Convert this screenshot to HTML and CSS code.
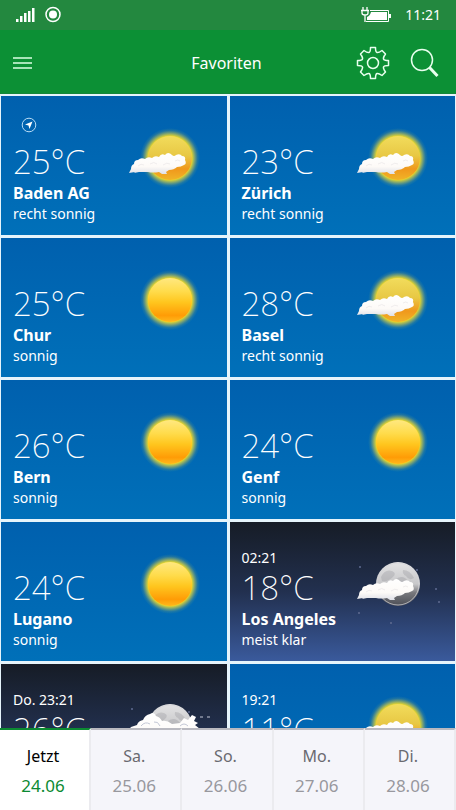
FILE: index.html
```
<!DOCTYPE html>
<html lang="de">
<head>
  <meta charset="UTF-8">
  <meta name="viewport" content="width=device-width, initial-scale=1.0">
  <title>Favoriten</title>
  <link rel="stylesheet" href="styles.css">
</head>
<body>
  <!-- shared weather icons -->
  <svg class="defs" width="0" height="0" aria-hidden="true">
    <defs>
      <radialGradient id="glow">
        <stop offset="0.72" stop-color="#ffe21c" stop-opacity="0.95"/>
        <stop offset="0.82" stop-color="#e8d838" stop-opacity="0.55"/>
        <stop offset="0.92" stop-color="#c8c850" stop-opacity="0.15"/>
        <stop offset="1" stop-color="#a0c850" stop-opacity="0"/>
      </radialGradient>
      <linearGradient id="sun-fill" x1="0" y1="0" x2="0" y2="1">
        <stop offset="0" stop-color="#ffe880"/>
        <stop offset="0.3" stop-color="#ffdc4c"/>
        <stop offset="0.55" stop-color="#ffc61e"/>
        <stop offset="0.85" stop-color="#ff9c06"/>
        <stop offset="1" stop-color="#ffb81c"/>
      </linearGradient>
      <linearGradient id="hazy-fill" x1="0" y1="0" x2="0" y2="1">
        <stop offset="0" stop-color="#f2dc5c"/>
        <stop offset="0.45" stop-color="#e8c844"/>
        <stop offset="0.75" stop-color="#f0981c"/>
        <stop offset="1" stop-color="#f0b428"/>
      </linearGradient>
      <linearGradient id="moon-fill" x1="0" y1="0" x2="0" y2="1">
        <stop offset="0" stop-color="#e4e4e5"/>
        <stop offset="0.5" stop-color="#c8c8ca"/>
        <stop offset="0.7" stop-color="#77777b"/>
        <stop offset="1" stop-color="#4c4e56"/>
      </linearGradient>
      <linearGradient id="cloud-fill" x1="0" y1="0" x2="0" y2="1">
        <stop offset="0" stop-color="#ffffff"/>
        <stop offset="0.65" stop-color="#fdfaf7"/>
        <stop offset="1" stop-color="#dfe0e8"/>
      </linearGradient>
      <symbol id="cloud" viewBox="0 0 112 112">
        <path d="M15 70 L17 66 Q17 62 20 61 Q20 57 24 57 Q27 54 31 56 Q34 53 38 55 Q41 52 45 54 Q47 50 51 52 Q54 48 58 52 Q60 54 62 52 Q66 50 68 53 Q72 53 71 57 Q73 61 70 62 Q67 64 63 64 Q60 67 55 67 L52 69 L53 71 L48 71 L45 69 Q39 70 34 69 L25 69 L20 70 L21 69 Z" fill="url(#cloud-fill)"/>
        <path d="M24 63 Q27 60 30 62 M36 61 Q40 58 43 61 M49 62 Q53 59 56 61 M61 58 Q64 56 66 58" fill="none" stroke="#f0eded" stroke-width="1"/>
      </symbol>
      <symbol id="stars" viewBox="0 0 112 112">
        <g fill="#5f6b90">
          <circle cx="18" cy="38" r="1"/><circle cx="75" cy="41" r="1"/>
          <circle cx="28" cy="57" r="1"/><circle cx="94" cy="60" r="1"/>
          <circle cx="97" cy="73" r="1"/><circle cx="17" cy="84" r="1"/>
          <circle cx="49" cy="94" r="1"/>
        </g>
      </symbol>
      <symbol id="moon" viewBox="0 0 112 112">
        <circle cx="56" cy="55" r="22" fill="url(#moon-fill)"/>
        <circle cx="56" cy="55" r="21" fill="none" stroke="#d4d4d8" stroke-width="1" opacity="0.7"/>
        <path d="M39 48 Q43 40 50 42 Q55 44 51 48 Q46 53 40 52 Z M61 41 Q68 41 72 49 Q67 52 64 47 Q60 45 61 41 Z M54 50 Q61 45 66 52 Q63 57 56 54 Z" fill="#8e9095" opacity="0.3"/>
      </symbol>
      <symbol id="sunny" viewBox="0 0 112 112">
        <circle cx="56" cy="55" r="30" fill="url(#glow)"/>
        <circle cx="56" cy="55" r="22" fill="url(#sun-fill)"/>
      </symbol>
      <symbol id="partly" viewBox="0 0 112 112">
        <circle cx="56" cy="55" r="30" fill="url(#glow)"/>
        <circle cx="56" cy="55" r="22" fill="url(#hazy-fill)"/>
        <use href="#cloud"/>
      </symbol>
      <symbol id="clear-night" viewBox="0 0 112 112">
        <use href="#stars"/>
        <use href="#moon"/>
        <use href="#cloud"/>
      </symbol>
      <symbol id="cloudy-night" viewBox="0 0 112 112">
        <use href="#stars"/>
        <use href="#moon"/>
        <path d="M14 60 L17 56 L23 54 Q24 50 29 49 Q31 44 36 43 Q40 40 42 45 Q46 46 48 50 Q53 49 58 53 L66 52 L70 47 L74 49 L78 44 L82 46 L80 50 L84 52 L81 54 L86 58 L88 64 Q88 76 76 76 L30 76 Q14 76 14 60 Z" fill="url(#cloud-fill)"/>
        <path d="M27 55 Q31 50 36 53 M40 51 Q44 50 46 55 M66 55 Q70 51 74 55 M86 46 H89 M93 46 H96" fill="none" stroke="#c4c8d6" stroke-width="1"/>
      </symbol>
    </defs>
  </svg>

  <div class="statusbar">
    <svg class="signal" width="48" height="18" viewBox="0 0 48 18" aria-label="Signal">
      <g fill="#fff">
        <rect x="0" y="13" width="2.500" height="3"/>
        <rect x="4" y="10" width="2.500" height="6"/>
        <rect x="8" y="7" width="2.500" height="9"/>
        <rect x="12" y="5" width="2.500" height="11"/>
        <rect x="16" y="2" width="2.500" height="14"/>
      </g>
      <circle cx="37" cy="8.500" r="7" fill="none" stroke="#fff" stroke-width="1.500"/>
      <circle cx="37" cy="8.500" r="4" fill="#fff"/>
    </svg>
    <svg class="battery" width="30" height="18" viewBox="0 0 30 18" aria-label="Akku">
      <path d="M2 1 V4 M6 1 V4 M0 4.500 H8 M1 5 V7 Q1 9 4 9 Q7 9 7 7 V5 M4 9 V16" fill="none" stroke="#fff" stroke-width="1.300"/>
      <path d="M9 4.500 H27.500 V15.500 H5" fill="none" stroke="#fff"/>
      <path d="M10 6 H26 V14 H6 V11 Q9 10 10 6 Z M28 8 H30 V12 H28 Z" fill="#fff"/>
    </svg>
    <span class="clock">11:21</span>
  </div>

  <header class="appbar">
    <button class="icon-btn menu" aria-label="Menü">
      <svg width="20" height="14" viewBox="0 0 20 14">
        <path d="M0 2 H19 M0 7 H19 M0 12 H19" stroke="#dcffe4" stroke-width="1.500"/>
      </svg>
    </button>
    <h1>Favoriten</h1>
    <div class="actions">
      <button class="icon-btn" aria-label="Einstellungen">
        <svg width="34" height="34" viewBox="0 0 34 34" fill="none" stroke="#e8ffee" stroke-width="1.500" stroke-linejoin="round">
          <path d="M14.500 1.500 H19.500 Q19.500 6 21 6.500 Q22.500 7 26 4.500 L29.500 8 Q27 11.500 27.500 13 Q28 14.500 32.500 14.500 V19.500 Q28 19.500 27.500 21 Q27 22.500 29.500 26 L26 29.500 Q22.500 27 21 27.500 Q19.500 28 19.500 32.500 H14.500 Q14.500 28 13 27.500 Q11.500 27 8 29.500 L4.500 26 Q7 22.500 6.500 21 Q6 19.500 1.500 19.500 V14.500 Q6 14.500 6.500 13 Q7 11.500 4.500 8 L8 4.500 Q11.500 7 13 6.500 Q14.500 6 14.500 1.500 Z"/>
          <circle cx="17" cy="17" r="5.500"/>
        </svg>
      </button>
      <button class="icon-btn" aria-label="Suchen">
        <svg width="30" height="30" viewBox="0 0 30 30" fill="none" stroke="#e8ffee">
          <circle cx="12" cy="12" r="10.500" stroke-width="1.500"/>
          <path d="M19.500 19.500 L27.500 28" stroke-width="3"/>
        </svg>
      </button>
    </div>
  </header>

  <main class="favorites">
    <a class="tile" href="#baden">
      <div class="info">
        <span class="meta">
          <svg class="locate" width="16" height="16" viewBox="0 0 16 16">
            <circle cx="8" cy="8" r="6.800" fill="none" stroke="#b9dcf5"/>
            <path d="M11.500 4.500 L8.500 12 L7.500 8.500 L4 7.500 Z" fill="#fff"/>
          </svg>
        </span>
        <span class="temp">25°C</span>
        <strong>Baden AG</strong>
        <span class="desc">recht sonnig</span>
      </div>
      <svg class="weather" viewBox="0 0 112 112"><use href="#partly"/></svg>
    </a>
    <a class="tile" href="#zuerich">
      <div class="info">
        <span class="meta"></span>
        <span class="temp">23°C</span>
        <strong>Zürich</strong>
        <span class="desc">recht sonnig</span>
      </div>
      <svg class="weather" viewBox="0 0 112 112"><use href="#partly"/></svg>
    </a>
    <a class="tile" href="#chur">
      <div class="info">
        <span class="meta"></span>
        <span class="temp">25°C</span>
        <strong>Chur</strong>
        <span class="desc">sonnig</span>
      </div>
      <svg class="weather" viewBox="0 0 112 112"><use href="#sunny"/></svg>
    </a>
    <a class="tile" href="#basel">
      <div class="info">
        <span class="meta"></span>
        <span class="temp">28°C</span>
        <strong>Basel</strong>
        <span class="desc">recht sonnig</span>
      </div>
      <svg class="weather" viewBox="0 0 112 112"><use href="#partly"/></svg>
    </a>
    <a class="tile" href="#bern">
      <div class="info">
        <span class="meta"></span>
        <span class="temp">26°C</span>
        <strong>Bern</strong>
        <span class="desc">sonnig</span>
      </div>
      <svg class="weather" viewBox="0 0 112 112"><use href="#sunny"/></svg>
    </a>
    <a class="tile" href="#genf">
      <div class="info">
        <span class="meta"></span>
        <span class="temp">24°C</span>
        <strong>Genf</strong>
        <span class="desc">sonnig</span>
      </div>
      <svg class="weather" viewBox="0 0 112 112"><use href="#sunny"/></svg>
    </a>
    <a class="tile" href="#lugano">
      <div class="info">
        <span class="meta"></span>
        <span class="temp">24°C</span>
        <strong>Lugano</strong>
        <span class="desc">sonnig</span>
      </div>
      <svg class="weather" viewBox="0 0 112 112"><use href="#sunny"/></svg>
    </a>
    <a class="tile night" href="#los-angeles">
      <div class="info">
        <span class="meta">02:21</span>
        <span class="temp">18°C</span>
        <strong>Los Angeles</strong>
        <span class="desc">meist klar</span>
      </div>
      <svg class="weather" viewBox="0 0 112 112"><use href="#clear-night"/></svg>
    </a>
    <a class="tile night" href="#fav-9">
      <div class="info">
        <span class="meta">Do. 23:21</span>
        <span class="temp">26°C</span>
      </div>
      <svg class="weather" viewBox="0 0 112 112"><use href="#cloudy-night"/></svg>
    </a>
    <a class="tile" href="#fav-10">
      <div class="info">
        <span class="meta">19:21</span>
        <span class="temp">11°C</span>
      </div>
      <svg class="weather" viewBox="0 0 112 112"><use href="#partly"/></svg>
    </a>
  </main>

  <nav class="days">
    <button class="active"><span>Jetzt</span><span class="date">24.06</span></button>
    <button><span>Sa.</span><span class="date">25.06</span></button>
    <button><span>So.</span><span class="date">26.06</span></button>
    <button><span>Mo.</span><span class="date">27.06</span></button>
    <button><span>Di.</span><span class="date">28.06</span></button>
  </nav>
</body>
</html>
```
FILE: styles.css
```
* {
  box-sizing: border-box;
}
body {
  margin: 0;
  height: 100vh;
  display: flex;
  flex-direction: column;
  font-family: "Noto Sans", "Open Sans", sans-serif;
  background-color: #e6f4fb;
  color: #fff;
}
.defs {
  position: absolute;
}
svg {
  display: block;
}
button {
  border: none;
  padding: 0;
  background: none;
  font-family: inherit;
  cursor: pointer;
}

/* top bars */
.statusbar {
  display: flex;
  align-items: center;
  flex-shrink: 0;
  height: 30px;
  padding: 0 15px 0 16px;
  background-color: #23883f;
}
.battery {
  margin-left: auto;
  margin-right: 14px;
}
.clock {
  font-size: 14px;
  line-height: 20px;
}
.appbar {
  display: grid;
  grid-template-columns: 1fr auto 1fr;
  align-items: center;
  flex-shrink: 0;
  height: 64px;
  padding: 3px 16px 0 13px;
  background-color: #0c9035;
  border-bottom: 1px solid #15863a;
}
.appbar h1 {
  margin: 0;
  font-size: 16px;
  font-weight: 400;
  line-height: 24px;
}
.actions {
  display: flex;
  align-items: center;
  justify-content: flex-end;
  gap: 20px;
}
.menu {
  justify-self: start;
}

/* favourites */
.favorites {
  flex: 1;
  min-height: 0;
  overflow-y: auto;
  scrollbar-width: none;
  display: grid;
  grid-template-columns: 1fr 1fr;
  grid-auto-rows: 139px;
  gap: 3px;
  padding: 2px 1px;
}
.tile {
  display: flex;
  justify-content: space-between;
  padding: 7px 1px 0 12px;
  background: linear-gradient(#0060ae, #0070b9);
  color: #fff;
  text-decoration: none;
  overflow: hidden;
}
.tile.night {
  background: linear-gradient(#161c26, #22304f 50%, #3a5a9c);
}
.info {
  display: flex;
  flex-direction: column;
  width: 100px;
  padding-top: 14px;
  white-space: nowrap;
}
.meta {
  display: flex;
  align-items: flex-end;
  height: 24px;
  font-size: 14px;
  line-height: 18px;
}
.locate {
  align-self: flex-start;
  margin-left: 8px;
}
.temp {
  font-size: 33px;
  font-weight: 200;
  line-height: 42px;
}
.info strong {
  font-size: 16px;
  font-weight: 700;
  line-height: 21px;
}
.desc {
  font-size: 14px;
  line-height: 20px;
}
.weather {
  flex-shrink: 0;
  width: 112px;
  height: 112px;
}

/* day tabs */
.days {
  display: grid;
  grid-template-columns: repeat(5, 1fr);
  flex-shrink: 0;
  height: 82px;
  background-color: #f5f5fa;
}
.days button {
  display: flex;
  flex-direction: column;
  align-items: center;
  padding: 11px 3px 0 0;
  border-top: 2px solid #b9b9c0;
  border-right: 2px solid #ebebef;
  color: #6a6a70;
  font-size: 16px;
  line-height: 30px;
}
.days .date {
  color: #98989e;
  font-size: 17px;
}
.days .active {
  background-color: #fff;
  border-top-color: #0c8a32;
  color: #000;
}
.days .active .date {
  color: #0c8a32;
}
```
